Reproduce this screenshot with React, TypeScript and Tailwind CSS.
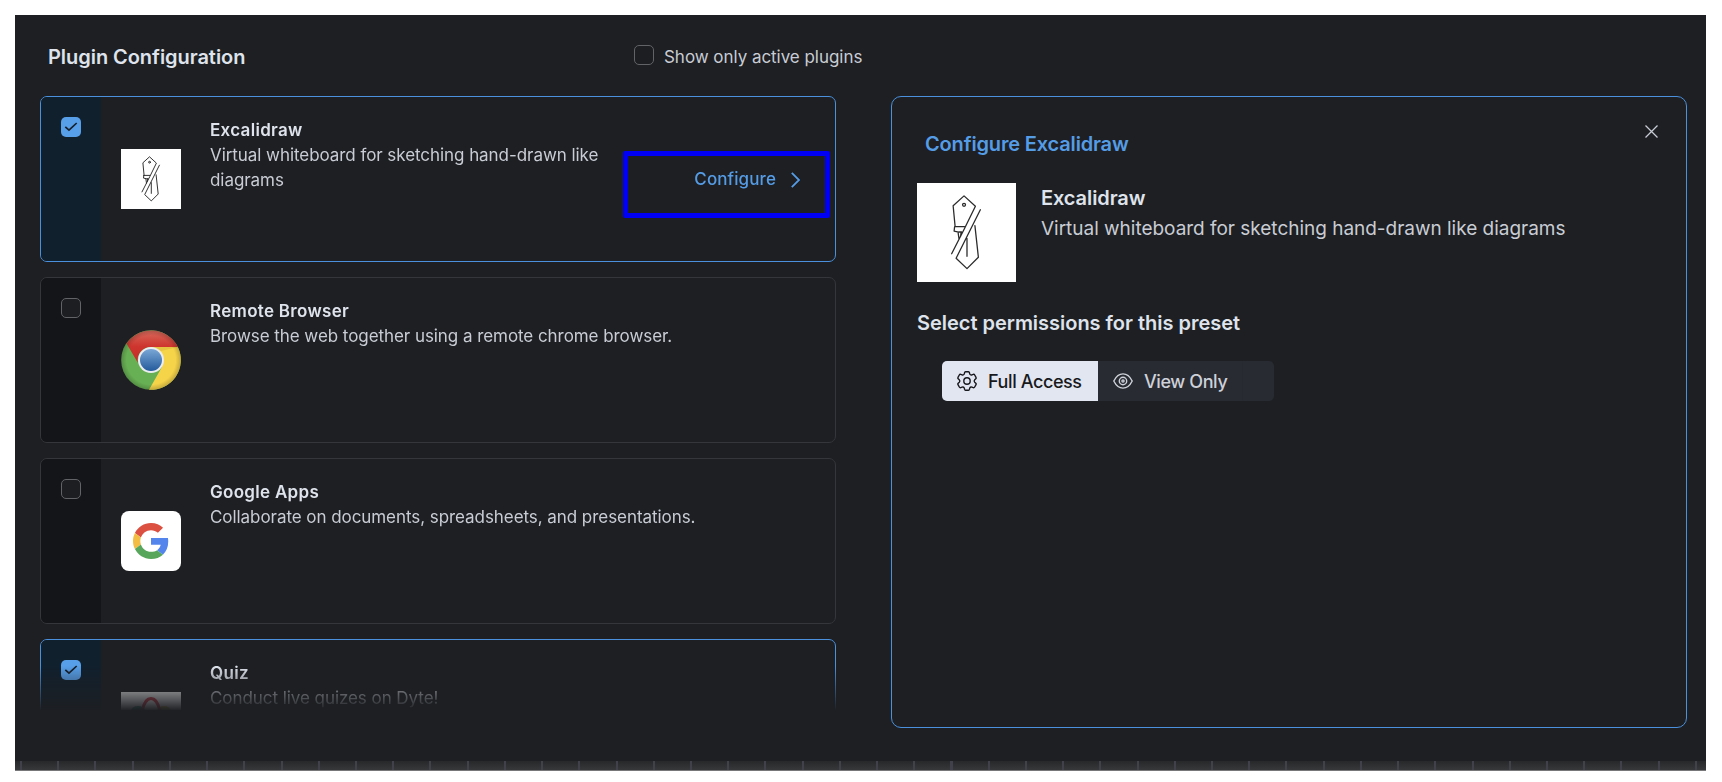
import React from "react";

const ink = "text-[#dfe3ec]";

function Check({ on }: { on: boolean }) {
  return on ? (
    <span className="flex size-5 items-center justify-center rounded-[5px] bg-[#579fe9]">
      <svg width="20" height="20" viewBox="0 0 20 20" fill="none" stroke="#18202b" strokeWidth="1.7">
        <path d="M4.3 9.8 8 13.2 15.7 6" />
      </svg>
    </span>
  ) : (
    <span className="block size-5 rounded-[5px] border border-[#626367] bg-[#1d1e22]" />
  );
}

function ExcalidrawLogo({ className, width }: { className: string; width: number }) {
  return (
    <svg className={className} viewBox="0 0 100 100" fill="none" stroke="#2b2b2b" strokeWidth={width} strokeLinejoin="round" strokeLinecap="round">
      <rect width="100" height="100" fill="#fff" stroke="none" />
      <path d="M38.500 44 36.500 23 47.500 13 59 23.500 48 46 35 71.500M38 44H48M38 44 37.500 48.500 42 49.500H45M41.500 50 42.500 57M44.500 50 44 54" />
      <path d="M64 27 39.500 76 50.500 86.500 62 75 58.500 43M50.500 56V74" />
      <circle cx="47.500" cy="22" r="1.500" />
    </svg>
  );
}

function ChromeLogo() {
  return (
    <svg className="size-[60px]" viewBox="0 0 60 60">
      <defs>
        <linearGradient id="red" x1="0" y1="0" x2="0" y2="1"><stop offset="0" stopColor="#d96a5c" /><stop offset=".5" stopColor="#cd342d" /><stop offset="1" stopColor="#c42f29" /></linearGradient>
        <radialGradient id="shade" cx=".5" cy=".5" r=".5"><stop offset=".82" stopColor="#000" stopOpacity="0" /><stop offset="1" stopColor="#000" stopOpacity=".2" /></radialGradient>
        <linearGradient id="blue" x1="0" y1="0" x2="0" y2="1"><stop offset="0" stopColor="#7aa7d6" /><stop offset="1" stopColor="#245b9c" /></linearGradient>
      </defs>
      <circle cx="30" cy="30" r="29.800" fill="#68b054" />
      <path d="M30 17H56.800A29.800 29.800 0 0 1 28 59.800L41 37Z" fill="#f6d44a" />
      <path d="M5.500 13.500A29.800 29.800 0 0 1 56.800 17H30A13 13 0 0 0 17 33Z" fill="url(#red)" />
      <path d="M30 17H56.800L40 21Z" fill="#d8b13a" opacity=".5" />
      <circle cx="30" cy="30" r="29.800" fill="url(#shade)" />
      <circle cx="30" cy="30" r="13" fill="#ebecef" />
      <circle cx="30" cy="30" r="11" fill="url(#blue)" />
    </svg>
  );
}

function GoogleLogo() {
  return (
    <span className="flex size-[60px] items-center justify-center rounded-lg bg-white">
      <svg className="size-9" viewBox="0 0 48 48">
        <path fill="#db5040" d="M24 9.500c3.540 0 6.710 1.220 9.210 3.600l6.850-6.850C35.900 2.380 30.470 0 24 0 14.620 0 6.510 5.380 2.560 13.220l7.980 6.190C12.430 13.720 17.740 9.500 24 9.500z" />
        <path fill="#5485ec" d="M46.980 24.550c0-1.570-.15-3.090-.38-4.550H24v9.020h12.940c-.58 2.960-2.260 5.480-4.780 7.180l7.730 6c4.510-4.180 7.090-10.360 7.090-17.650z" />
        <path fill="#f2bd42" d="M10.530 28.590c-.48-1.450-.76-2.990-.76-4.590s.27-3.140.76-4.590l-7.980-6.190C.92 16.460 0 20.120 0 24c0 3.880.92 7.540 2.560 10.780l7.970-6.190z" />
        <path fill="#57a65c" d="M24 48c6.480 0 11.930-2.130 15.890-5.810l-7.730-6c-2.150 1.450-4.920 2.300-8.160 2.300-6.260 0-11.570-4.220-13.470-9.910l-7.980 6.190C6.510 42.620 14.620 48 24 48z" />
      </svg>
    </span>
  );
}

function QuizLogo() {
  return (
    <svg className="size-[60px]" viewBox="0 0 60 60">
      <rect width="60" height="60" fill="#fff" />
      <ellipse cx="17" cy="19" rx="7" ry="5" fill="#3f9a8c" />
      <ellipse cx="43" cy="19" rx="7" ry="5" fill="#dfc04f" />
      <path d="M21 20C24 2 36 2 39 20" fill="none" stroke="#d93f50" strokeWidth="3" />
    </svg>
  );
}

type Plugin = { name: string; text: string; on: boolean; logo: React.ReactNode; configure?: boolean };

const plugins: Plugin[] = [
  { name: "Excalidraw", text: "Virtual whiteboard for sketching hand-drawn like diagrams", on: true, logo: <ExcalidrawLogo className="size-[60px]" width={1.6} />, configure: true },
  { name: "Remote Browser", text: "Browse the web together using a remote chrome browser.", on: false, logo: <ChromeLogo /> },
  { name: "Google Apps", text: "Collaborate on documents, spreadsheets, and presentations.", on: false, logo: <GoogleLogo /> },
  { name: "Quiz", text: "Conduct live quizes on Dyte!", on: true, logo: <QuizLogo /> },
];

function PluginCard({ p }: { p: Plugin }) {
  return (
    <div className={`relative flex h-[166px] shrink-0 overflow-hidden rounded-[7px] border ${p.on ? "border-[#4a90dc]" : "border-[#35363b]"}`}>
      <div className={`flex w-[60px] shrink-0 justify-center pt-5 ${p.on ? "bg-[#11202d]" : "bg-[#141519]"}`}>
        <Check on={p.on} />
      </div>
      <div className="flex w-[100px] shrink-0 items-center pl-5">{p.logo}</div>
      <div className="ml-[9px] w-[500px] pt-[21px] leading-[25px]">
        <div className={`text-[17px] font-semibold tracking-[0.3px] ${ink}`}>{p.name}</div>
        <div className={`text-[17px] tracking-[-0.06px] text-[#c9ccd4] ${p.configure ? "w-[410px]" : "whitespace-nowrap"}`}>{p.text}</div>
      </div>
      {p.configure && (
        <div className="absolute top-[54px] right-[5px] flex h-[67px] w-[207px] justify-end rounded-[2px] border-[5px] border-[#0000f5] pt-[11px] pr-[25px]">
          <div className="flex h-[25px] items-center gap-[15px] text-[17px] font-medium tracking-[0.1px] text-[#559ce6]">
            Configure
            <svg width="9" height="16" viewBox="0 0 9 16" fill="none" stroke="currentColor" strokeWidth="1.800"><path d="M.8 .8 8 8 .8 15.200" /></svg>
          </div>
        </div>
      )}
    </div>
  );
}

function GearIcon() {
  return (
    <svg width="20" height="20" viewBox="0 0 20 20" fill="none" stroke="currentColor" strokeWidth="1.400" strokeLinejoin="round">
      <path d="M8.500.8H11.500Q12.300.8 12.500 1.800L12.700 3Q13.500 4.300 15 3.800L16.200 3.400Q17.200 3.100 17.700 4L19 6.400Q19.400 7.100 18.800 7.700L17.700 8.800Q16.800 10 17.700 11.200L18.800 12.300Q19.400 12.900 19 13.600L17.700 16Q17.200 16.900 16.200 16.600L15 16.200Q13.500 15.700 12.700 17L12.500 18.200Q12.300 19.200 11.500 19.200H8.500Q7.700 19.200 7.500 18.200L7.300 17Q6.500 15.700 5 16.200L3.800 16.600Q2.800 16.900 2.300 16L1 13.600Q.6 12.900 1.200 12.300L2.300 11.200Q3.200 10 2.300 8.800L1.200 7.700Q.6 7.100 1 6.400L2.300 4Q2.800 3.100 3.800 3.400L5 3.800Q6.500 4.300 7.300 3L7.500 1.800Q7.700.8 8.500.8Z" />
      <circle cx="10" cy="10" r="3.200" />
    </svg>
  );
}

function EyeIcon() {
  return (
    <svg width="20" height="16" viewBox="0 0 20 16" fill="none" stroke="currentColor" strokeWidth="1.400">
      <path d="M.8 8C3 3.500 6.500.9 10 .9S17 3.500 19.200 8C17 12.500 13.500 15.100 10 15.100S3 12.500.8 8Z" />
      <circle cx="10" cy="8" r="3.700" />
      <circle cx="10" cy="8" r="1.100" />
    </svg>
  );
}

export default function App() {
  return (
    <div className="h-[782px] w-[1722px] bg-white p-[15px] pr-4 font-['Inter',sans-serif]">
      <div className="flex h-[756px] flex-col bg-[#1d1f23]">
        <div className="flex h-[81px] items-start pl-[33px]">
          <h1 className={`mt-[30px] w-[586px] text-[20px] leading-6 font-semibold tracking-[-0.05px] ${ink}`}>Plugin Configuration</h1>
          <div className="mt-[28px] flex items-center gap-[10px] pt-[2px] text-[17px] leading-6 text-[#c9ccd4]">
            <span className="-mt-1"><Check on={false} /></span>
            <span className="tracking-[-0.04px]">Show only active plugins</span>
          </div>
        </div>
        <div className="flex h-[665px] items-start pl-[25px]">
          <div className="flex h-[614px] w-[796px] flex-col gap-[15px] overflow-hidden [mask-image:linear-gradient(to_bottom,black_570px,transparent_615px)]">
            {plugins.map((p) => <PluginCard key={p.name} p={p} />)}
          </div>
          <div className="relative ml-[55px] h-[632px] w-[796px] rounded-[10px] border border-[#4a90dc] pl-[25px]">
            <svg className="absolute top-[28px] right-[28px]" width="13" height="13" viewBox="0 0 13 13" stroke="#c9ccd4" strokeWidth="1.300"><path d="M.5 .5 12.500 12.500M12.500 .5 .5 12.500" /></svg>
            <h2 className="mt-[35px] ml-2 text-[20px] leading-6 font-semibold tracking-[-0.16px] text-[#559ce6]">Configure Excalidraw</h2>
            <div className="mt-[27px] flex h-[100px]">
              <ExcalidrawLogo className="size-[99px]" width={1.300} />
              <div className="ml-[25px] leading-[30px]">
                <div className={`text-[20px] font-semibold tracking-[-0.1px] ${ink}`}>Excalidraw</div>
                <div className="pt-px text-[19px] tracking-[-0.02px] text-[#c9ccd4]">Virtual whiteboard for sketching hand-drawn like diagrams</div>
              </div>
            </div>
            <h3 className={`mt-[28px] text-[20px] leading-6 font-semibold tracking-[-0.02px] ${ink}`}>Select permissions for this preset</h3>
            <div className="mt-[26px] ml-[25px] flex h-10 w-[332px] overflow-hidden rounded-[5px] bg-[#292b32] text-[18px] font-medium tracking-[-0.4px]">
              <div className="flex w-[156px] items-center bg-[#e2e6f1] pl-[15px] text-[#18191c]">
                <GearIcon />
                <span className="ml-[11px]">Full Access</span>
              </div>
              <div className="flex w-[145px] items-center border-r border-[#272930] pl-[15px] text-[#ced1d9]">
                <EyeIcon />
                <span className="ml-[11px]">View Only</span>
              </div>
            </div>
          </div>
        </div>
        <div className="h-[10px] border-b border-[#77777a] bg-[repeating-linear-gradient(90deg,transparent_0_5px,#40414a_5px_7px,transparent_7px_37.220px),linear-gradient(#27282a,#37383a)]" />
      </div>
    </div>
  );
}
